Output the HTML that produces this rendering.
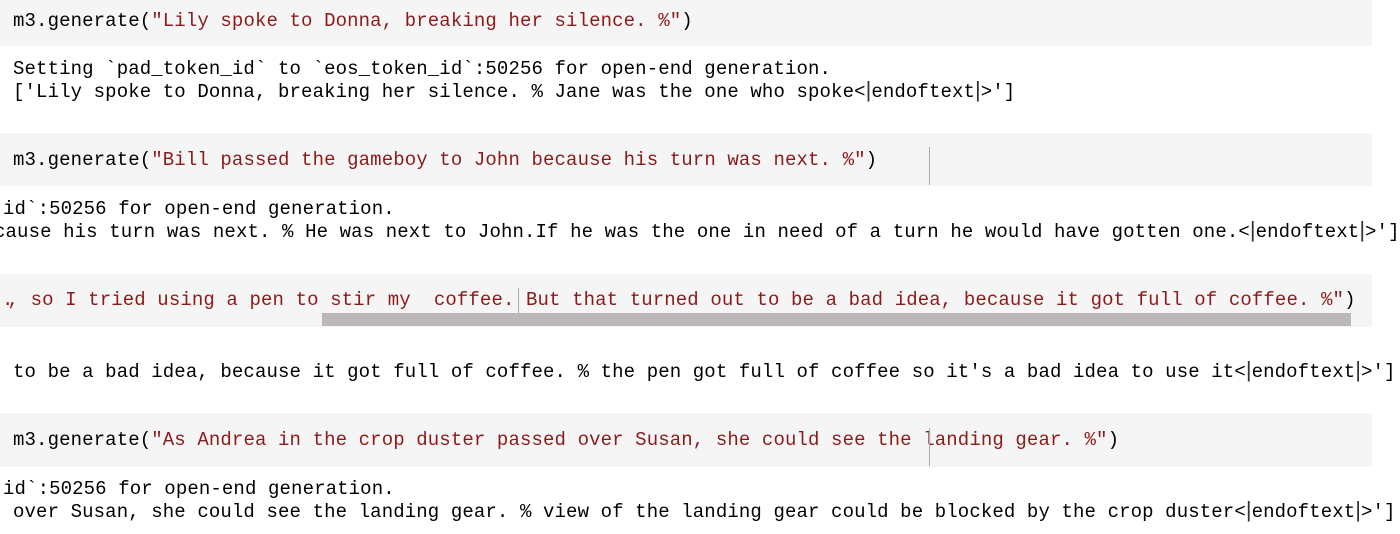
<!DOCTYPE html>
<html><head><style>
body{margin:0;width:1400px;height:534px;background:#fff;position:relative;overflow:hidden;font-family:"Liberation Mono",monospace;font-size:19px;letter-spacing:0.12px;color:#000}
.c{position:absolute;left:0;width:1372px;background:#f5f5f5}
.t{position:absolute;white-space:pre;line-height:23px}
.r{color:#8b1a1a}
.v{position:absolute;width:1px;background:#aaa}
.p{font-family:"Liberation Sans",sans-serif;font-size:22px;letter-spacing:0;line-height:0;color:#333}
</style></head><body>
<div class="c" style="top:0;height:46px"></div>
<div class="c" style="top:133px;height:53px"></div>
<div class="c" style="top:274px;height:53px"></div>
<div class="c" style="top:413px;height:54px"></div>
<div class="t" style="left:13px;top:10px">m3.generate(<span class="r">"Lily spoke to Donna, breaking her silence. %"</span>)</div>
<div class="t" style="left:13px;top:58px">Setting `pad_token_id` to `eos_token_id`:50256 for open-end generation.
['Lily spoke to Donna, breaking her silence. % Jane was the one who spoke&lt;<span class="p">|</span>endoftext<span class="p">|</span>&gt;']</div>
<div class="t" style="left:13px;top:149px">m3.generate(<span class="r">"Bill passed the gameboy to John because his turn was next. %"</span>)</div>
<div class="v" style="left:929px;top:147px;height:38px"></div>
<div class="t" style="left:3px;top:198px">id`:50256 for open-end generation.</div>
<div class="t" style="left:-6px;top:221px">cause his turn was next. % He was next to John.If he was the one in need of a turn he would have gotten one.&lt;<span class="p">|</span>endoftext<span class="p">|</span>&gt;']</div>
<div class="t r" style="left:2px;top:289px">.</div>
<div class="t r" style="left:-4px;top:289px"> , so I tried using a pen to stir my  coffee. But that turned out to be a bad idea, because it got full of coffee. %"<span style="color:#000">)</span></div>
<div class="v" style="left:518px;top:288px;height:38px"></div>
<div style="position:absolute;left:322px;top:313px;width:1029px;height:13px;background:#bdb8b8"></div>
<div class="t" style="left:13px;top:361px">to be a bad idea, because it got full of coffee. % the pen got full of coffee so it's a bad idea to use it&lt;<span class="p">|</span>endoftext<span class="p">|</span>&gt;']</div>
<div class="t" style="left:13px;top:429px">m3.generate(<span class="r">"As Andrea in the crop duster passed over Susan, she could see the landing gear. %"</span>)</div>
<div class="v" style="left:929px;top:428px;height:38px"></div>
<div class="t" style="left:3px;top:478px">id`:50256 for open-end generation.</div>
<div class="t" style="left:13px;top:501px">over Susan, she could see the landing gear. % view of the landing gear could be blocked by the crop duster&lt;<span class="p">|</span>endoftext<span class="p">|</span>&gt;']</div>
</body></html>
